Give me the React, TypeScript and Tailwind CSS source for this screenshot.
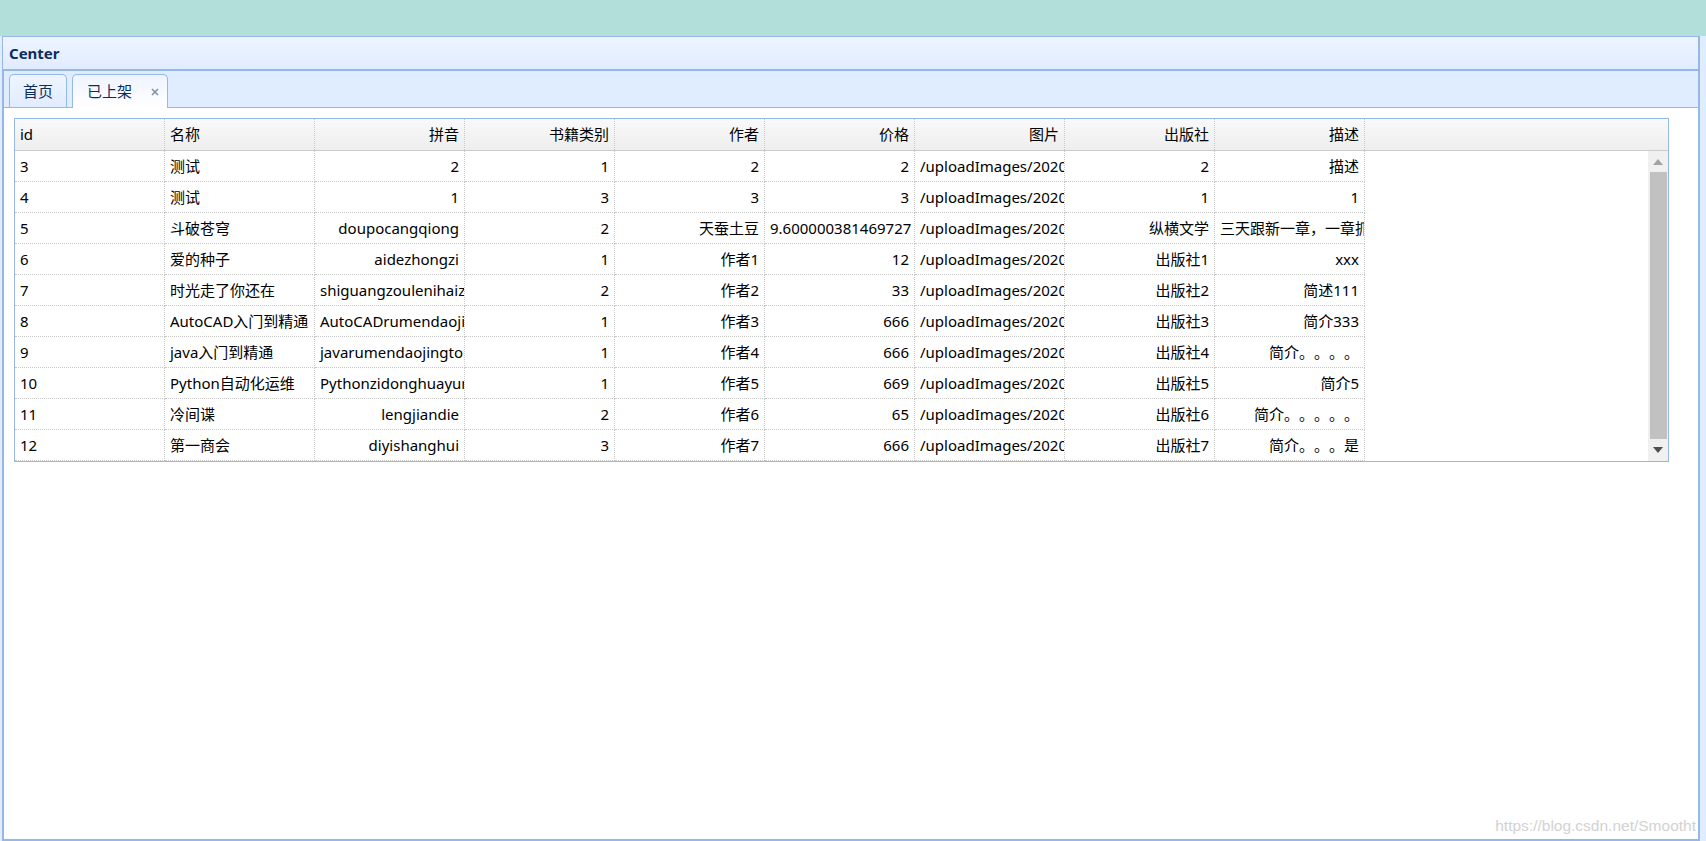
import React from 'react';

type Col = { title: string; head: 'left' | 'right'; align: 'left' | 'right' };

const columns: Col[] = [
  { title: 'id', head: 'left', align: 'left' },
  { title: '名称', head: 'left', align: 'left' },
  { title: '拼音', head: 'right', align: 'right' },
  { title: '书籍类别', head: 'right', align: 'right' },
  { title: '作者', head: 'right', align: 'right' },
  { title: '价格', head: 'right', align: 'right' },
  { title: '图片', head: 'right', align: 'left' },
  { title: '出版社', head: 'right', align: 'right' },
  { title: '描述', head: 'right', align: 'right' },
];

const img = '/uploadImages/20200512/book.jpg';

const rows: string[][] = [
  ['3', '测试', '2', '1', '2', '2', img, '2', '描述'],
  ['4', '测试', '1', '3', '3', '3', img, '1', '1'],
  ['5', '斗破苍穹', 'doupocangqiong', '2', '天蚕土豆', '9.600000381469727', img, '纵横文学', '三天跟新一章，一章抓心挠肺'],
  ['6', '爱的种子', 'aidezhongzi', '1', '作者1', '12', img, '出版社1', 'xxx'],
  ['7', '时光走了你还在', 'shiguangzoulenihaizai', '2', '作者2', '33', img, '出版社2', '简述111'],
  ['8', 'AutoCAD入门到精通', 'AutoCADrumendaojingtong', '1', '作者3', '666', img, '出版社3', '简介333'],
  ['9', 'java入门到精通', 'javarumendaojingtong', '1', '作者4', '666', img, '出版社4', '简介。。。。'],
  ['10', 'Python自动化运维', 'Pythonzidonghuayunwei', '1', '作者5', '669', img, '出版社5', '简介5'],
  ['11', '冷间谍', 'lengjiandie', '2', '作者6', '65', img, '出版社6', '简介。。。。。'],
  ['12', '第一商会', 'diyishanghui', '3', '作者7', '666', img, '出版社7', '简介。。。是'],
];

function DataGrid() {
  return (
    <div className="w-[1655px] h-[344px] border border-[#95b8e7] flex flex-col bg-white">
      {/* header */}
      <div className="h-[32px] shrink-0 flex border-b border-[#cccccc] bg-gradient-to-b from-[#f9f9f9] to-[#eeeeee]">
        {columns.map((c) => (
          <div
            key={c.title}
            className={`w-[150px] shrink-0 h-full flex items-center border-r border-dotted border-[#c8c8c8] px-[5px] overflow-hidden whitespace-nowrap ${c.head === 'right' ? 'justify-end' : 'justify-start'}`}
          >
            {c.title}
          </div>
        ))}
      </div>

      {/* body */}
      <div className="flex flex-1 min-h-0">
        <div className="flex-1 flex flex-col">
          {rows.map((r) => (
            <div key={r[0]} className="flex h-[31px]">
              {r.map((v, i) => (
                <div
                  key={i}
                  className={`w-[150px] shrink-0 h-full leading-[30px] border-r border-b border-dotted border-[#c8c8c8] px-[5px] overflow-hidden whitespace-nowrap ${columns[i].align === 'right' ? 'text-right' : 'text-left'}`}
                >
                  {v}
                </div>
              ))}
            </div>
          ))}
        </div>

        {/* scrollbar */}
        <div className="w-[20px] shrink-0 bg-[#f0f0f0] flex flex-col">
          <div className="h-[21px] flex items-center justify-center">
            <svg width="10" height="6" viewBox="0 0 10 6">
              <path d="M0 6 L5 0 L10 6 Z" fill="#a3a3a3" />
            </svg>
          </div>
          <div className="h-[267px] ml-[2px] mr-[1px] bg-[#c1c1c1]" />
          <div className="flex-1 flex items-center justify-center">
            <svg width="10" height="6" viewBox="0 0 10 6">
              <path d="M0 0 L10 0 L5 6 Z" fill="#505050" />
            </svg>
          </div>
        </div>
      </div>
    </div>
  );
}

export default function App() {
  return (
    <div
      className="h-[841px] w-full flex flex-col overflow-hidden bg-[#b3dfdb] text-[15px] text-black [text-spacing-trim:space-all]"
      style={{ fontFamily: '"Noto Sans", "Noto Sans CJK SC", sans-serif' }}
    >
      <div className="h-[36px] shrink-0" />

      <div className="flex-1 min-h-0 flex bg-[#e0ecff] pl-[2px]">
        <div className="w-[1698px] flex flex-col border border-r-2 border-b-2 border-[#95b8e7]">
          {/* panel title */}
          <div className="h-[33px] shrink-0 flex items-center pl-[6px] border-b border-[#95b8e7] bg-gradient-to-b from-[#eff5ff] to-[#e0ecff]">
            <span className="font-bold text-[#0e2d5f]">Center</span>
          </div>

          {/* tabs */}
          <div className="flex-1 min-h-0 flex flex-col border-l border-t border-[#95b8e7]">
            <div className="h-[37px] shrink-0 flex items-end gap-[5px] pl-[5px] bg-[#e0ecff] border-b border-[#95b8e7]">
              <div className="w-[58px] h-[33px] flex items-center justify-center border-t border-l border-r border-[#95b8e7] rounded-t-[5px] bg-gradient-to-b from-[#eff5ff] to-[#e0ecff] text-[#0e2d5f]">
                首页
              </div>
              <div className="w-[96px] h-[34px] -mb-px flex items-center pl-[14px] border-t border-l border-r border-[#95b8e7] rounded-t-[5px] bg-gradient-to-b from-[#eef4ff] to-white text-[#0e2d5f]">
                <span>已上架</span>
                <svg className="ml-[19px]" width="8" height="8" viewBox="0 0 8 8">
                  <path d="M1 1 L7 7 M7 1 L1 7" stroke="#8290ab" strokeWidth="1.6" />
                </svg>
              </div>
            </div>

            <div className="flex-1 min-h-0 relative overflow-hidden bg-white pl-[10px] pt-[10px]">
              <DataGrid />
              <div
                className="absolute right-[2px] bottom-[6px] text-[15.5px] leading-none text-[#d2d2d2] whitespace-nowrap"
                style={{ fontFamily: '"Liberation Sans", Arial, sans-serif' }}
              >
                https://blog.csdn.net/Smootht
              </div>
            </div>
          </div>
        </div>
      </div>
    </div>
  );
}
